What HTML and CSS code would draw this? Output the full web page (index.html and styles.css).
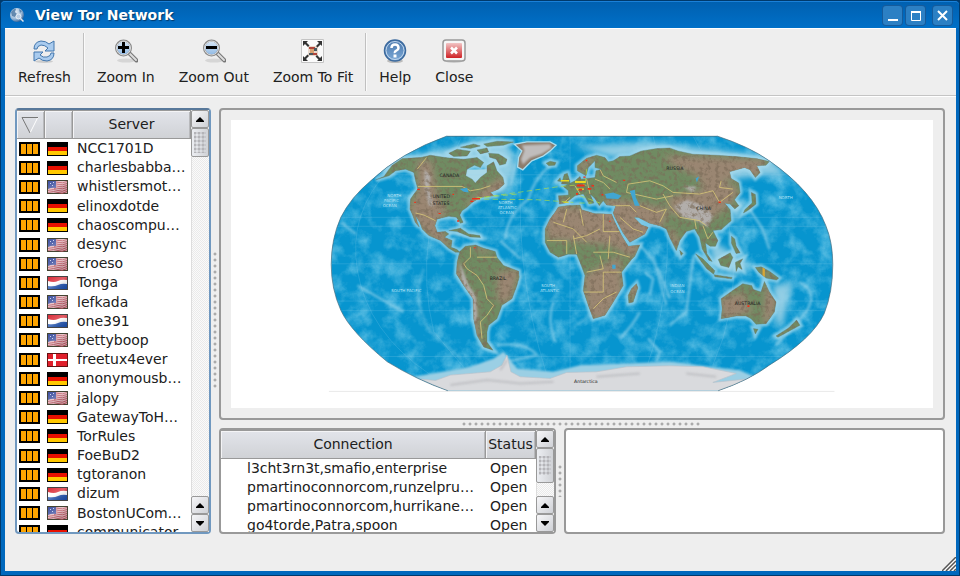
FILE: index.html
```html
<!DOCTYPE html>
<html lang="en">
<head>
<meta charset="utf-8">
<title>View Tor Network</title>
<link rel="stylesheet" href="styles.css">
</head>
<body>
<svg class="defs" aria-hidden="true">
  <defs>
    <linearGradient id="sheen" x1="0" y1="0" x2="1" y2="1">
      <stop offset="0" stop-color="#fff" stop-opacity=".1"/><stop offset=".45" stop-color="#fff" stop-opacity=".45"/><stop offset="1" stop-color="#000" stop-opacity=".15"/>
    </linearGradient>
    <linearGradient id="lens" x1="0" y1="0" x2="0" y2="1"><stop offset="0" stop-color="#dbe9f7"/><stop offset="1" stop-color="#8db8e4"/></linearGradient>
    <linearGradient id="red" x1="0" y1="0" x2="0" y2="1"><stop offset="0" stop-color="#f2c4c4"/><stop offset="1" stop-color="#cf2226"/></linearGradient>
    <linearGradient id="blue" x1="0" y1="0" x2="0" y2="1"><stop offset="0" stop-color="#4a78ad"/><stop offset="1" stop-color="#7ba8d6"/></linearGradient>
    <radialGradient id="globe" cx=".35" cy=".3" r=".8"><stop offset="0" stop-color="#eef4fb"/><stop offset=".6" stop-color="#9ab9d8"/><stop offset="1" stop-color="#1b4d86"/></radialGradient>
  </defs>
  <symbol id="bw" viewBox="0 0 21 14"><path fill="#000" d="M0 0h21v14H0z"/><path fill="#ffa500" d="M2 2h5v10H2zM8 2h5v10H8zM14 2h5v10h-5z"/></symbol>
  <symbol id="de" viewBox="0 0 21 14"><path fill="#000" d="M0 0h21v14H0z"/><path fill="#e81000" d="M1 5h19v4H1z"/><path fill="#ffc800" d="M1 9h19v4H1z"/></symbol>
  <symbol id="us" viewBox="0 0 21 14"><path fill="#443" d="M0 0h21v14H0z"/><path fill="#e2b4ba" d="M1 1h19v12H1z"/><path stroke="#b84c5a" d="M1 12.500q6-2 10 0t9-1M1 10.500q6-2 10 0t9-1M7 8.500q2-1 5 0t8-1M7 6.500q2-1 5 0t8-1M7 4.500q2-1 5 0t8-1M7 2.500q2-1 5 0t8-1" fill="none"/><path fill="#33469a" d="M1 1h8v7q-4-1-8 1z"/><path fill="#c5cdec" d="M3 3h1v1H3zM6 2h1v1H6zM5 5h1v1H5z"/><path fill="url(#sheen)" opacity=".6" d="M1 1h19v12H1z"/></symbol>
  <symbol id="nl" viewBox="0 0 21 14"><path fill="#444" d="M0 0h21v14H0z"/><path fill="#fff" d="M1 1h19v12H1z"/><path fill="#d8202c" d="M1 1h19v3q-5-1-9 1t-10 0z"/><path fill="#1c50b0" d="M1 10q6 1 10-1t9-1v5H1z"/><path fill="url(#sheen)" opacity=".6" d="M1 1h19v12H1z"/></symbol>
  <symbol id="dk" viewBox="0 0 21 14"><path fill="#611" d="M0 0h21v14H0z"/><path fill="#e0202c" d="M1 1h19v12H1z"/><path fill="#fff" d="M6 1h3v5h11v2H9v5H6V8H1V6h5z"/></symbol>
  <symbol id="up" viewBox="0 0 8 5"><path d="M4 0l4 4v1H0V4z"/></symbol>
  <symbol id="down" viewBox="0 0 8 5"><path d="M4 5L0 1V0h8v1z"/></symbol>
</svg>

<div class="window">
  <header class="titlebar">
    <svg class="app-icon" viewBox="0 0 16 16" aria-hidden="true"><circle cx="8" cy="8" r="7" fill="url(#globe)"/><path fill="#47739f" opacity=".8" d="M2 5q3-4 5-3l-1 3 2 2-2 3-3-1zM10 2l3 2-2 2z"/><circle cx="9.500" cy="9.500" r="2.500" fill="#b9cee4" stroke="#e8eef5"/><path stroke="#dfe6ee" stroke-width="1.500" d="M11.500 11.500l3 3"/></svg>
    <h1>View Tor Network</h1>
    <button class="win-btn" aria-label="Minimize"><svg viewBox="0 0 19 19"><path fill="#fff" d="M5 13h10v2H5z"/></svg></button>
    <button class="win-btn" aria-label="Maximize"><svg viewBox="0 0 19 19"><path fill="none" stroke="#fff" d="M5.500 5.500h9v9h-9z"/><path fill="#fff" d="M5 5h10v2H5z"/></svg></button>
    <button class="win-btn last" aria-label="Close window"><svg viewBox="0 0 19 19"><path stroke="#fff" stroke-width="2" d="M5 5l9 9M14 5l-9 9"/></svg></button>
  </header>

  <nav class="toolbar">
    <button><svg viewBox="0 0 24 24" aria-hidden="true"><ellipse cx="12" cy="22.500" rx="9" ry="1.500" fill="#ccc"/><g fill="#a9cbee" stroke="#4377ad" stroke-linejoin="round"><path d="M2 10Q2 3 9 2q5 0 8 3l5-3v10h-9l3-3q-3-3-7-3-4 1-4 4z"/><path d="M22 14q0 7-7 8-5 0-8-3l-5 3V13h9l-3 3q3 3 7 2 4-1 4-4z"/></g></svg>Refresh</button>
    <hr>
    <button><svg viewBox="0 0 24 24" aria-hidden="true"><ellipse cx="12" cy="21.500" rx="9" ry="2" fill="#d6d6d6"/><path d="M15.500 14.500l7 7" stroke="#777" stroke-width="4" stroke-linecap="round"/><path d="M16 15l6 6" stroke="#ddd" stroke-width="2" stroke-linecap="round"/><circle cx="9.500" cy="9" r="7.500" fill="url(#lens)" stroke="#888" stroke-width="2"/><circle cx="9.500" cy="9" r="7" fill="none" stroke="#ddd"/><path d="M8 3h3v4h4v3h-4v4H8v-4H4V7h4z"/></svg>Zoom In</button>
    <button><svg viewBox="0 0 24 24" aria-hidden="true"><ellipse cx="12" cy="21.500" rx="9" ry="2" fill="#d6d6d6"/><path d="M15.500 14.500l7 7" stroke="#777" stroke-width="4" stroke-linecap="round"/><path d="M16 15l6 6" stroke="#ddd" stroke-width="2" stroke-linecap="round"/><circle cx="9.500" cy="9" r="7.500" fill="url(#lens)" stroke="#888" stroke-width="2"/><circle cx="9.500" cy="9" r="7" fill="none" stroke="#ddd"/><path d="M4 7h11v3H4z"/></svg>Zoom Out</button>
    <button><svg viewBox="0 0 24 24" aria-hidden="true"><path fill="#fafafa" stroke="#c4c4c4" d="M.500.500h22v23H.500z"/><path fill="#e8d8cc" d="M7 7h10v10H7z"/><path fill="#b0443a" d="M8 8h6v2H8zM12 14h4v2h-4z"/><path fill="#d9a070" d="M9 10h4v4H9z"/><path fill="#4b5a60" d="M13 9h3v3h-3zM8 14h4v2H8z"/><path fill="#333" d="M2 2h5L5.500 3.500l3 3-1.500 1.500-3-3L2 7zM21 2v5l-1.500-1.500-3 3-1.500-1.500 3-3L16 2zM2 22v-5l1.500 1.500 3-3 1.500 1.500-3 3L7 22zM21 22h-5l1.500-1.500-3-3 1.500-1.500 3 3L21 17z"/></svg>Zoom To Fit</button>
    <hr>
    <button><svg viewBox="0 0 24 24" aria-hidden="true"><ellipse cx="12" cy="22" rx="8" ry="2" fill="#bbb"/><circle cx="12" cy="11.500" r="10.500" fill="url(#blue)" stroke="#3c6a9e" stroke-width="1.500"/><circle cx="12" cy="11.500" r="9" fill="none" stroke="#c3d8ee"/><path d="M8.500 9q0-3.500 3.500-3.500T15.500 9q0 1.500-2 2.500T12 14" fill="none" stroke="#fff" stroke-width="2.500"/><path fill="#fff" d="M10.500 15.500h3v3h-3z"/></svg>Help</button>
    <button><svg viewBox="0 0 24 24" aria-hidden="true"><ellipse cx="12" cy="22.500" rx="8" ry="1.500" fill="#ccc"/><rect x="1" y="1" width="22" height="21" rx="3" fill="#f6f6f6" stroke="#999" stroke-width="1.500"/><rect x="4" y="4" width="16" height="15" rx="1" fill="url(#red)"/><path d="M9 8.500l6 6M15 8.500l-6 6" stroke="#fff" stroke-width="2.500"/></svg>Close</button>
  </nav>

  <main class="content">
    <section class="panel servers" aria-label="Servers">
      <div class="view">
        <table class="server-table">
          <thead><tr><th class="icon-col" aria-label="Status"><svg class="sort" viewBox="0 0 18 18" aria-hidden="true"><path d="M17 1L9 17" stroke="#fff" fill="none"/><path d="M17 1.500H1L9 17" stroke="#777" fill="none"/></svg></th><th class="icon-col" aria-label="Country"></th><th>Server</th></tr></thead>
          <tbody>
            <tr><td><svg><use href="#bw"/></svg></td><td><svg><use href="#de"/></svg></td><td>NCC1701D</td></tr>
            <tr><td><svg><use href="#bw"/></svg></td><td><svg><use href="#de"/></svg></td><td>charlesbabba…</td></tr>
            <tr><td><svg><use href="#bw"/></svg></td><td><svg><use href="#us"/></svg></td><td>whistlersmot…</td></tr>
            <tr><td><svg><use href="#bw"/></svg></td><td><svg><use href="#de"/></svg></td><td>elinoxdotde</td></tr>
            <tr><td><svg><use href="#bw"/></svg></td><td><svg><use href="#de"/></svg></td><td>chaoscompu…</td></tr>
            <tr><td><svg><use href="#bw"/></svg></td><td><svg><use href="#us"/></svg></td><td>desync</td></tr>
            <tr><td><svg><use href="#bw"/></svg></td><td><svg><use href="#us"/></svg></td><td>croeso</td></tr>
            <tr><td><svg><use href="#bw"/></svg></td><td><svg><use href="#nl"/></svg></td><td>Tonga</td></tr>
            <tr><td><svg><use href="#bw"/></svg></td><td><svg><use href="#us"/></svg></td><td>lefkada</td></tr>
            <tr><td><svg><use href="#bw"/></svg></td><td><svg><use href="#nl"/></svg></td><td>one391</td></tr>
            <tr><td><svg><use href="#bw"/></svg></td><td><svg><use href="#us"/></svg></td><td>bettyboop</td></tr>
            <tr><td><svg><use href="#bw"/></svg></td><td><svg><use href="#dk"/></svg></td><td>freetux4ever</td></tr>
            <tr><td><svg><use href="#bw"/></svg></td><td><svg><use href="#de"/></svg></td><td>anonymousb…</td></tr>
            <tr><td><svg><use href="#bw"/></svg></td><td><svg><use href="#us"/></svg></td><td>jalopy</td></tr>
            <tr><td><svg><use href="#bw"/></svg></td><td><svg><use href="#de"/></svg></td><td>GatewayToH…</td></tr>
            <tr><td><svg><use href="#bw"/></svg></td><td><svg><use href="#de"/></svg></td><td>TorRules</td></tr>
            <tr><td><svg><use href="#bw"/></svg></td><td><svg><use href="#de"/></svg></td><td>FoeBuD2</td></tr>
            <tr><td><svg><use href="#bw"/></svg></td><td><svg><use href="#de"/></svg></td><td>tgtoranon</td></tr>
            <tr><td><svg><use href="#bw"/></svg></td><td><svg><use href="#nl"/></svg></td><td>dizum</td></tr>
            <tr><td><svg><use href="#bw"/></svg></td><td><svg><use href="#us"/></svg></td><td>BostonUCom…</td></tr>
            <tr><td><svg><use href="#bw"/></svg></td><td><svg><use href="#de"/></svg></td><td>communicator</td></tr>
          </tbody>
        </table>
      </div>
      <div class="scrollbar">
        <button aria-label="Scroll up"><svg><use href="#up"/></svg></button>
        <div class="thumb"></div><div class="track"></div>
        <button aria-label="Scroll up"><svg><use href="#up"/></svg></button>
        <button aria-label="Scroll down"><svg><use href="#down"/></svg></button>
      </div>
    </section>

    <div class="splitter vertical"><span class="grip long"></span></div>

    <div class="right">
      <section class="panel map" aria-label="Network map">
        <svg viewBox="-267 -18 2106 867" role="img" aria-label="World map">
          <defs>
            <clipPath id="world"><path d="M380 30H1192Q1290 62 1350 105Q1480 195 1520 300Q1541 350 1541 417Q1541 500 1515 565Q1480 640 1350 720Q1290 765 1196 797H382Q290 765 200 710Q90 620 60 555Q31 490 31 417Q31 340 60 275Q90 215 150 165Q240 80 380 30Z"/></clipPath>
            <filter id="soft" x="-10%" y="-10%" width="120%" height="120%"><feGaussianBlur stdDeviation="4"/></filter>
            <filter id="softer" x="-30%" y="-30%" width="160%" height="160%"><feGaussianBlur stdDeviation="10"/></filter>
            <filter id="sea" x="0" y="0" width="100%" height="100%">
              <feTurbulence type="fractalNoise" baseFrequency=".02" numOctaves="5" seed="5"/>
              <feColorMatrix values="0 0 0 0 .35  0 0 0 0 .74  0 0 0 0 .9  1.600 0 0 0 -.650"/>
            </filter>
            <filter id="grain" x="0" y="0" width="100%" height="100%">
              <feTurbulence type="fractalNoise" baseFrequency=".08" numOctaves="4" seed="3"/>
              <feColorMatrix values="0 0 0 0 .2  0 0 0 0 .15  0 0 0 0 .1  4 0 0 0 -1.900"/>
            </filter>
            <path id="continents" d="M165 162L190 152 203 133 215 118 245 98 300 95 330 88 380 96 430 100 470 95 490 110 480 125 462 118 440 130 436 150 455 160 465 172 480 155 500 140 500 120 520 108 530 135 548 155 552 175 535 190 510 200 520 210 480 215 455 230 440 245 425 255 418 268 428 290 420 293 408 275 385 272 350 280 343 300 350 320 375 318 385 325 372 335 395 345 392 365 410 372 418 380 405 380 385 368 360 345 325 330 305 310 298 290 285 270 290 290 296 304 284 290 275 265 268 250 270 220 280 205 292 190 285 165 280 140 255 130 225 135 205 150Z
              M385 82L410 70 450 76 440 90 400 92ZM420 64L460 54 480 60 450 68ZM470 72L500 66 505 78 480 84ZM490 54L530 46 580 48 550 58 500 62ZM505 82L535 84 560 100 556 114 538 118 528 100 508 94Z
              M678 112L690 106 708 110 704 118 686 120ZM724 174L733 145 742 142 750 168 748 176ZM712 166L720 156 724 168Z
              M418 378L435 362 465 358 490 368 525 378 530 395 550 420 595 437 597 455 590 480 575 520 545 540 530 580 505 600 500 620 500 650 518 675 490 665 470 630 460 580 458 520 430 480 408 445 410 410ZM385 315L420 308 445 325 478 330 480 336 450 334 410 318Z
              M715 244L740 240 780 238 785 252 825 264 840 264 875 266 885 290 905 330 925 362 960 358 945 392 935 402 905 440 910 480 895 505 880 530 855 570 820 580 805 540 790 495 795 450 780 410 770 386 745 386 715 395 690 380 675 350 675 310 690 280 705 260ZM950 475L954 488 940 530 927 533 925 510 935 490Z
              M715 210L745 208 745 195 730 182 765 165 780 152 783 160 825 155 828 135 845 130 825 125 825 105 805 125 798 150 785 142 772 135 772 120 800 97 830 88 855 95 865 108 880 105 900 92 930 90 965 75 1010 68 1050 66 1075 75 1120 85 1190 88 1250 92 1310 98 1350 107 1340 118 1312 120 1322 140 1308 155 1292 132 1275 125 1230 138 1235 158 1258 172 1262 200 1245 222 1258 240 1246 250 1232 235 1215 232 1232 252 1235 285 1205 312 1180 315 1195 345 1188 362 1172 362 1158 352 1162 385 1178 408 1168 404 1148 370 1140 335 1125 310 1100 318 1080 345 1070 375 1050 335 1040 310 1020 300 990 293 955 275 942 275 965 298 985 305 975 325 930 350 910 322 885 275 880 262 888 240 860 238 850 225 838 240 825 218 810 205 822 232 808 235 790 205 765 210 750 222 735 232 718 235Z
              M1080 374L1090 384 1084 390ZM1296 200L1308 206 1310 235 1286 254 1272 262 1276 252 1298 232ZM1236 332L1246 340 1250 362 1262 382 1250 384 1236 354ZM1128 385L1150 400 1186 436 1182 446 1160 428ZM1196 402L1232 382 1240 396 1228 426 1204 420ZM1184 448L1238 456 1236 460 1186 454ZM1248 410L1270 400 1262 414 1268 432 1256 424 1250 438ZM1308 426L1325 424 1350 437 1378 458 1372 464 1340 458 1318 440Z
              M1205 520L1240 495 1270 475 1297 480 1302 492 1325 500 1335 468 1350 500 1370 530 1365 560 1340 595 1310 597 1295 580 1280 572 1250 572 1205 580 1208 550ZM1302 610L1316 612 1308 626ZM1432 584L1442 600 1420 612 1376 636 1370 632 1408 608Z"/>
            <clipPath id="land"><use href="#continents"/></clipPath>
          </defs>
          <path d="M24 799H1546" stroke="#e9e9e9" stroke-width="3"/>
          <g clip-path="url(#world)">
            <path fill="#0795cf" d="M0 0h1580v800H0z"/>
            <path fill="#000" filter="url(#sea)" opacity=".7" d="M0 0h1580v800H0z"/>
            <g filter="url(#softer)" fill="#9fd3e6" opacity=".9">
              <path d="M140 140L230 92 300 85 350 75 480 42 560 45 590 120 560 200 520 205 500 120 280 98 200 140ZM760 60L1000 48 1350 90 1400 150 1320 150 1210 165 1000 84 880 96ZM1170 340L1250 390 1300 420 1240 450 1180 420ZM1230 230L1280 220 1250 300ZM1360 480L1420 470 1390 600 1370 600Z"/>
            </g>
            <g fill="none" stroke="#a5daee" stroke-width="9" opacity=".5" filter="url(#soft)">
              <path d="M690 120Q640 160 625 220Q560 270 555 340M700 530Q680 580 705 650M960 360Q1010 400 1050 520M900 640Q940 600 960 560M1000 390Q1020 470 1040 540M1122 390L1100 560 1050 600M60 290L105 325M110 480L250 560M540 345L600 400M530 660Q620 650 650 690L560 710M975 440L1000 460 990 510M985 640L1020 680 1010 710M1290 250L1330 310 1350 370M1440 470Q1500 500 1460 560L1370 660M600 60L570 180M380 320L500 340"/>
              <path d="M310 430Q270 520 330 620L420 700M770 600L850 540" opacity=".5"/>
            </g>
            <use href="#continents" fill="none" stroke="#a9dcee" stroke-width="16" opacity=".7" filter="url(#soft)"/>
            <path d="M432 132L500 130 504 162 482 168 468 178 440 160Z" fill="#a9d8e8"/>
            <g stroke="#9bd6f0" stroke-width="1" opacity=".6" fill="none"><path d="M0 147H1580M0 275H1580M0 302H1580M0 415H1580M0 527H1580M0 556H1580M0 694H1580"/><path d="M180 160Q70 300 120 480T380 780M420 40Q270 340 340 620L450 750M610 30Q570 400 680 750M1000 30Q1100 400 970 760M1120 30Q1330 380 1180 720M750 30V760"/></g>
            <use href="#continents" fill="#708b62" stroke="#5a7a76" stroke-width="1"/>
            <g clip-path="url(#land)">
              <g filter="url(#softer)" fill="#9a8672">
                <path d="M290 100L335 105 350 200 380 260 350 290 380 340 400 370 350 350 290 300 265 250 290 200Z"/>
                <path d="M430 240L470 205 530 160 545 150 560 200 470 240ZM405 380L430 470 470 520 480 670 460 670 440 500 395 450ZM530 440L600 430 570 530 530 530ZM440 358L520 375 490 385Z"/>
                <path d="M670 240L890 250 960 370 940 400 870 360 680 340ZM790 450L900 390 910 500 850 590 800 570ZM920 470L960 470 940 540Z"/>
                <path d="M850 215L960 230 1050 250 1030 300 980 350 900 330 870 260ZM1030 90L1130 90 1340 100 1320 150 1210 165 1260 190 1240 230 1180 280 1060 270 1040 215 1150 190 1130 150 1060 120ZM1050 300L1085 350 1070 370 1045 330ZM800 95L770 130 780 145 830 95ZM720 215L760 235 720 240Z"/>
                <path d="M1200 520L1270 500 1300 560 1210 585ZM1340 470L1375 530 1350 595 1330 590ZM1370 635L1440 595 1370 630ZM1310 424L1380 460 1340 450Z"/>
              </g>
              <path filter="url(#soft)" fill="#b2aeab" d="M1065 242L1100 222 1150 238 1180 270 1165 305 1130 285 1090 275ZM1090 182L1130 182 1120 200ZM312 130L330 150 325 190 340 240 325 240 312 180ZM418 410L445 480 465 510 470 570 462 600 455 520 425 470Z"/>
              <path d="M0 0h1580v800H0z" filter="url(#grain)" opacity=".65"/>
              <g fill="none" stroke="#d9c878" stroke-width="3" opacity=".8" stroke-linejoin="round">
                <path d="M318 95L290 130M292 182H425L450 195 480 190 510 180M285 262L310 268 345 285M450 365L450 395 430 415 440 430 470 450 490 480 500 520 520 540 500 570 480 590 485 640M470 395L530 395M700 290L760 310 800 350M740 250L730 290M780 250L790 300M850 262V318H900M680 345H740V385M760 340L800 330 840 310M820 380H880L930 395M800 440L850 430 840 390M790 500H850V440H905M820 550L850 520 890 500M870 330L865 400M760 330L770 386"/>
                <path d="M925 175L990 165 1030 180 1060 200 1140 205 1180 195 1200 230 1240 200M925 175L920 200 1010 220 1060 210M1030 205L1050 240 1080 275 1140 285 1160 300M960 240L1010 260 1040 250 1020 290M880 240L930 240 950 260M900 275L940 310 970 320M1125 280L1130 310M1150 300L1165 340 1180 320M1205 165L1200 185 1240 190M750 215L735 228M765 180L780 205M800 160L810 205M825 160L850 170 870 190M840 130L850 150 890 170"/>
              </g>
              <path fill="#41a6d2" d="M855 205L880 200 905 210 895 220 860 218ZM930 196L945 192 948 215 960 240 945 240 938 218ZM1128 158L1138 152 1132 170ZM418 190L440 186 445 200 430 198ZM877 418h10v12h-10z"/>
              <path stroke="#d9a735" stroke-width="7" d="M1333 425V458"/>
            </g>
            <path d="M582 55L620 48 690 48 708 58 690 75 670 90 635 105 608 132 592 124 595 95 605 75Z" fill="#8c7b6b" stroke="#a9dcee" stroke-width="4"/>
            <path filter="url(#soft)" fill="#c0bdbc" d="M605 58L690 54 694 66 665 84 630 96 608 116 602 100 612 74Z"/>
            <path filter="url(#soft)" fill="#9bcfe4" d="M280 755L450 725 520 700 550 680 590 730 700 740 780 720 1050 710 1260 735 1320 760 1200 800H380Z"/>
            <path fill="#d9dadd" stroke="#b9c3cb" stroke-width="2" d="M300 762L345 766 390 750 450 745 510 740 545 720 560 690 572 740 600 755 690 760 740 742 830 740 920 725 1050 722 1150 725 1250 745 1180 772 1300 760 1200 798H380Z"/>
            <path filter="url(#soft)" fill="none" stroke="#b5b6ba" stroke-width="6" opacity=".7" d="M390 780L500 765 600 775 700 770M830 755L960 745M1100 745L1190 755M540 735L560 705"/>
            <g fill="none" stroke="#aee04a" stroke-width="2" stroke-dasharray="16 10"><path d="M465 218L720 182 770 178M465 220L650 222 760 230M470 217L600 204M780 210L840 232M800 130L795 180M765 165L800 180M778 232L815 232"/></g>
            <g fill="#e8d820"><path d="M722 163h25v4h-25zM765 166h32v6h-32zM730 228h16v3h-16zM770 188h22v4h-22z"/></g>
            <g fill="#f03018"><path d="M290 189h8v4h-8zM281 228h5v4h-5zM396 204h5v4h-5zM354 262h7v3h-7zM410 284h6v4h-6zM455 217h24v4h-24zM450 225h9v4h-9zM460 365h6v3h-6zM770 176h24v6h-24zM776 189h10v5h-10zM803 187h11v5h-11zM815 178h7v4h-7zM768 202h6v5h-6zM790 152h7v4h-7zM845 205h5v4h-5zM910 162h6v4h-6zM1197 227h7v5h-7zM1284 540h6v5h-6zM797 102h5v4h-5zM868 285h4v3h-4z"/></g>
            <g class="map-labels"><text x="357" y="154">CANADA</text><text x="336" y="216">UNITED</text><text x="336" y="238">STATES</text><text x="1040" y="132">RUSSIA</text><text x="1130" y="254">CHINA</text><text x="508" y="464">BRAZIL</text><text x="1246" y="540">AUSTRALIA</text><text x="762" y="774">Antarctica</text></g>
            <g class="sea-labels"><text x="200" y="215">NORTH</text><text x="190" y="229">PACIFIC</text><text x="186" y="243">OCEAN</text><text x="535" y="236">NORTH</text><text x="532" y="250">ATLANTIC</text><text x="538" y="264">OCEAN</text><text x="212" y="500">SOUTH PACIFIC</text><text x="663" y="486">SOUTH</text><text x="660" y="500">ATLANTIC</text><text x="1052" y="486">INDIAN</text><text x="1052" y="502">OCEAN</text><text x="1378" y="220">NORTH</text></g>
          </g>
          <path d="M380 31H1192M150 165Q240 80 380 30M1192 30Q1290 62 1350 105Q1480 195 1520 300Q1541 350 1541 417Q1541 500 1515 565Q1480 640 1350 720Q1290 765 1196 797M382 797Q290 765 200 710Q90 620 60 555Q31 490 31 417Q31 340 60 275Q90 215 150 165" fill="none" stroke="#456b7d" stroke-width="2"/>
        </svg>
      </section>

      <div class="splitter horizontal"><span class="grip"></span></div>

      <div class="bottom">
        <section class="panel connections" aria-label="Connections">
          <div class="view">
            <table class="connection-table">
              <thead><tr><th>Connection</th><th class="status-col">Status</th></tr></thead>
              <tbody>
                <tr><td>l3cht3rn3t,smafio,enterprise</td><td>Open</td></tr>
                <tr><td>pmartinoconnorcom,runzelpru…</td><td>Open</td></tr>
                <tr><td>pmartinoconnorcom,hurrikane…</td><td>Open</td></tr>
                <tr><td>go4torde,Patra,spoon</td><td>Open</td></tr>
              </tbody>
            </table>
          </div>
          <div class="scrollbar">
            <button aria-label="Scroll up"><svg><use href="#up"/></svg></button>
            <div class="thumb tall"></div><div class="track"></div>
            <button aria-label="Scroll up"><svg><use href="#up"/></svg></button>
            <button aria-label="Scroll down"><svg><use href="#down"/></svg></button>
          </div>
        </section>
        <div class="splitter vertical"><span class="grip short"></span></div>
        <section class="panel details" aria-label="Details"></section>
      </div>
    </div>
  </main>

  <footer class="statusbar"><svg viewBox="0 0 14 14" aria-hidden="true"><path d="M1 14L14 1M5 14L14 5M9 14L14 9" stroke="#fff" stroke-width="2"/><path d="M0 14L14 0M4 14L14 4M8 14L14 8M12 14L14 12" stroke="#555" stroke-width="1.500"/></svg></footer>
</div>
</body>
</html>
```

FILE: styles.css
```css
* { box-sizing: border-box; }

body {
  margin: 0;
  background: #003a6c;
  color: #202020;
  font: 14px/19px "DejaVu Sans", sans-serif;
}

button {
  padding: 0;
  border: 0;
  background: none;
  color: inherit;
  font: inherit;
}

.defs { position: absolute; width: 0; height: 0; }

.window {
  display: flex;
  flex-direction: column;
  height: 100vh;
  padding: 0 3px 4px 4px;
  border: 1px solid #003a6c;
  border-radius: 5px 5px 0 0;
  background: #0068bd;
}

/* Title bar */
.titlebar {
  display: flex;
  flex: none;
  align-items: center;
  gap: 4px;
  height: 27px;
  margin: 0 -3px 0 -4px;
  padding: 0 7px 0 8px;
  border-top: 1px solid #1a80d8;
  border-radius: 4px 4px 0 0;
  background: linear-gradient(#0060b0, #0070c8);
}

.app-icon { width: 16px; height: 16px; }

.titlebar h1 {
  flex: 1;
  margin: 0 0 0 6px;
  color: #fff;
  font-size: 14px;
  text-shadow: 1px 1px 1px #003a6c;
}

.win-btn {
  width: 19px;
  height: 19px;
  border-radius: 3px;
  background: #2c80c4;
  box-shadow: 0 0 0 1px #155b9c;
}

.win-btn.last { margin-left: 4px; }
.win-btn svg { display: block; }

/* Toolbar */
.toolbar {
  display: flex;
  flex: none;
  height: 68px;
  padding: 4px 1px;
  border-top: 1px solid #fff;
  border-bottom: 1px solid #c4c4c4;
  background: #eee;
}

.toolbar button {
  display: flex;
  flex-direction: column;
  align-items: center;
  padding: 6px 12px 0;
  gap: 5px;
}

.toolbar svg { width: 24px; height: 24px; }

.toolbar hr {
  width: 2px;
  margin: 0;
  border: 0;
  border-left: 1px solid #c0c0c0;
  border-right: 1px solid #fafafa;
}

/* Panes */
.content {
  display: flex;
  flex: 1;
  min-height: 0;
  padding: 11px 11px 0 10px;
  border-top: 1px solid #fff;
  background: #eee;
}

.panel {
  display: flex;
  border: 2px solid #999;
  border-radius: 4px;
  background: #fff;
}

.servers {
  flex: none;
  width: 196px;
  border-color: #7098bf;
  border-top-color: #58789a;
}

.view { flex: 1; min-width: 0; overflow: hidden; }

.right { display: flex; flex: 1; flex-direction: column; min-width: 0; }

.map {
  flex: 1;
  min-height: 0;
  padding: 10px;
  background: #eee;
}

.map svg { width: 100%; height: 100%; background: #fff; }

.map-labels { fill: #222; font-size: 14px; }
.sea-labels { fill: #b5e2f5; font-size: 12px; }

.bottom { display: flex; flex: none; height: 106px; }
.connections { flex: none; width: 337px; }
.details { flex: 1; }

.splitter { display: flex; flex: none; align-items: center; justify-content: center; }
.splitter.vertical { width: 8px; }
.splitter.horizontal { height: 8px; }

.grip {
  width: 240px;
  height: 4px;
  background: radial-gradient(circle at 2px 2px, #aaa 1px, #f8f8f8 2px, transparent 2px) 0 0 / 6px 6px;
}

.grip.long { width: 4px; height: 138px; }
.grip.short { width: 4px; height: 32px; }

/* Tables */
table { width: 100%; table-layout: fixed; border-collapse: separate; border-spacing: 0; }

.server-table { height: 432px; }

th {
  height: 29px;
  padding: 0 2px;
  overflow: hidden;
  border: 1px solid #999;
  border-width: 1px 1px 1px 0;
  box-shadow: inset 1px 1px #f4f4f6, inset -1px 0 #b8b9bc;
  background: linear-gradient(#e2e4ea, #d0d2d6);
  font-weight: 400;
  white-space: nowrap;
}

.icon-col { width: 28px; }
.status-col { width: 50px; }
.sort { display: block; width: 18px; height: 18px; margin-left: 2px; }

td { padding: 0; overflow: hidden; white-space: nowrap; }
td svg { display: block; width: 21px; height: 14px; margin-left: 2px; }

.server-table td:last-child { padding-left: 4px; }
.connection-table td:first-child { padding-left: 26px; }
.connection-table td:last-child { padding-left: 4px; }

/* Scroll bars */
.scrollbar {
  display: flex;
  flex: none;
  flex-direction: column;
  width: 18px;
  background: #eee;
}

.scrollbar button {
  display: grid;
  place-items: center;
  height: 18px;
  border: 1px solid #999;
  border-radius: 2px;
  background: linear-gradient(135deg, #f6f6f8, #cfd1d6);
}

.scrollbar svg { width: 8px; height: 5px; }

.thumb {
  height: 29px;
  border: 1px solid #999;
  border-radius: 2px;
  background:
    radial-gradient(circle at 2px 2px, #b4b4b8 1px, transparent 2px) 3px 3px / 4px 4px content-box,
    linear-gradient(90deg, #eceef2, #d0d2d6);
  padding: 3px 2px;
}

.thumb.tall { height: 35px; padding: 7px 2px; }

.track {
  flex: 1;
  border-left: 1px solid #ddd;
  background: repeating-conic-gradient(#eaeaea 0 25%, #fafafa 0 50%) 0 0 / 2px 2px;
}

/* Status bar */
.statusbar {
  display: flex;
  flex: none;
  align-items: flex-end;
  justify-content: flex-end;
  height: 37px;
  background: #eee;
}

.statusbar svg { width: 14px; height: 14px; }
```
